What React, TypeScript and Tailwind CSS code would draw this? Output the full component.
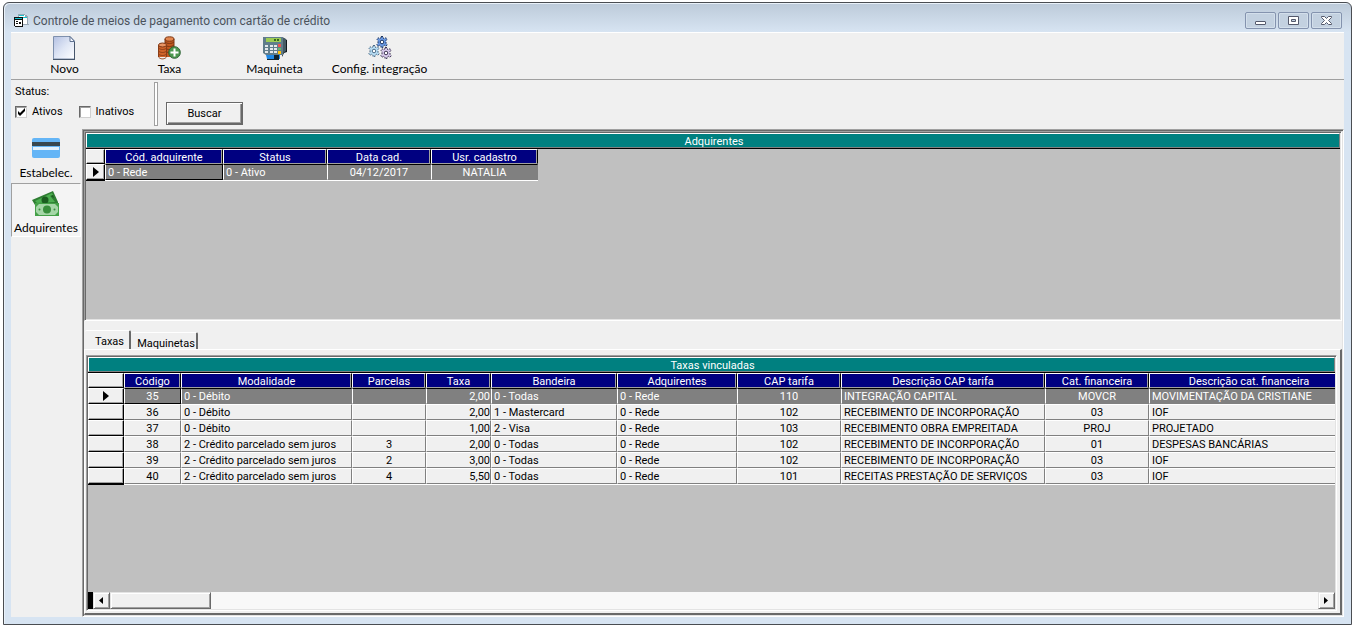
import type { ReactNode } from "react";
import { clsx } from "clsx";

interface Column {
    label: string;
    width: string;
    align?: "left" | "center" | "right";
}

interface GridProps {
    id: string;
    title: string;
    selectorWidth: string;
    tableWidth: string;
    columns: Column[];
    rows: string[][];
    children?: ReactNode;
}

const sunken = "border border-t-[#a0a0a0] border-l-[#a0a0a0] border-r-white border-b-white p-px shadow-[inset_1px_1px_0_#696969,inset_-1px_-1px_0_#e3e3e3]";

const adquirentesColumns: Column[] = [
    { label: "Cód. adquirente", width: "w-[118px]" },
    { label: "Status", width: "w-[104px]" },
    { label: "Data cad.", width: "w-[104px]", align: "center" },
    { label: "Usr. cadastro", width: "w-[107px]", align: "center" },
];

const adquirentesRows = [["0 - Rede", "0 - Ativo", "04/12/2017", "NATALIA"]];

const taxasColumns: Column[] = [
    { label: "Código", width: "w-[57px]", align: "center" },
    { label: "Modalidade", width: "w-[171px]" },
    { label: "Parcelas", width: "w-[74px]", align: "center" },
    { label: "Taxa", width: "w-[65px]", align: "right" },
    { label: "Bandeira", width: "w-[126px]" },
    { label: "Adquirentes", width: "w-[120px]" },
    { label: "CAP tarifa", width: "w-[104px]", align: "center" },
    { label: "Descrição CAP tarifa", width: "w-[204px]" },
    { label: "Cat. financeira", width: "w-[104px]", align: "center" },
    { label: "Descrição cat. financeira", width: "w-[200px]" },
];

const taxasRows = [
    ["35", "0 - Débito", "", "2,00", "0 - Todas", "0 - Rede", "110", "INTEGRAÇÃO CAPITAL", "MOVCR", "MOVIMENTAÇÃO DA CRISTIANE"],
    ["36", "0 - Débito", "", "2,00", "1 - Mastercard", "0 - Rede", "102", "RECEBIMENTO DE INCORPORAÇÃO", "03", "IOF"],
    ["37", "0 - Débito", "", "1,00", "2 - Visa", "0 - Rede", "103", "RECEBIMENTO OBRA EMPREITADA", "PROJ", "PROJETADO"],
    ["38", "2 - Crédito parcelado sem juros", "3", "2,00", "0 - Todas", "0 - Rede", "102", "RECEBIMENTO DE INCORPORAÇÃO", "01", "DESPESAS BANCÁRIAS"],
    ["39", "2 - Crédito parcelado sem juros", "2", "3,00", "0 - Todas", "0 - Rede", "102", "RECEBIMENTO DE INCORPORAÇÃO", "03", "IOF"],
    ["40", "2 - Crédito parcelado sem juros", "4", "5,50", "0 - Todas", "0 - Rede", "101", "RECEITAS PRESTAÇÃO DE SERVIÇOS", "03", "IOF"],
];

function FormsIcon() {
    return (
        <svg width="16" height="14" viewBox="0 0 16 14" shapeRendering="crispEdges" aria-hidden="true">
            <path d="M4 0h7v1h2v1h1v8h1v1H9V9H4z" fill="#9aa7b3" />
            <path d="M5 1h6v8H5z" fill="#fff" />
            <path d="M9 3h4v7H9z" fill="#fff" />
            <path d="M5 1h5v1H5zM9 3h4v1H9z" fill="#19c5d2" />
            <path d="M0 3h9v10H1V12H0z" fill="#111" />
            <path d="M1 4h7v1H1z" fill="#19c5d2" />
            <path d="M1 6h7v6H1z" fill="#fff" />
            <path d="M2 7h2v1H2zM2 9h2v1H2zM5 8h2v2H5z" fill="#111" />
        </svg>
    );
}

function PageIcon() {
    return (
        <svg width="24" height="24" viewBox="0 0 24 24" aria-hidden="true">
            <defs>
                <linearGradient id="page" x1="0" y1="0" x2="1" y2="1">
                    <stop offset="0" stopColor="#b3c0e2" />
                    <stop offset="0.500" stopColor="#dfe6f5" />
                    <stop offset="1" stopColor="#fff" />
                </linearGradient>
            </defs>
            <path d="M.5 .5H17l4.500 4.500V23H.5z" fill="url(#page)" stroke="#7e90ad" />
            <path d="M17 .5V5.500h4.500z" fill="#f6f9ff" stroke="#5f7290" />
            <path d="M0 23.500h22M21.500 6v17" stroke="#47566b" />
        </svg>
    );
}

function CoinsIcon() {
    return (
        <svg width="24" height="24" viewBox="0 0 24 24" aria-hidden="true">
            <path d="M7 3v18h9V3z" fill="#c2591f" />
            <ellipse cx="11.500" cy="3" rx="4.500" ry="2.200" fill="#e28750" stroke="#7d3612" />
            <path d="M7 6c2 2 7 2 9 0M7 9c2 2 7 2 9 0M7 12c2 2 7 2 9 0M7 15c2 2 7 2 9 0M7 3v15M16 3v15" fill="none" stroke="#7d3612" />
            <path d="M.5 9v12h8V9z" fill="#d0642a" />
            <ellipse cx="4.500" cy="9" rx="4" ry="2" fill="#e99463" stroke="#7d3612" />
            <path d="M.5 12c2 2 6 2 8 0M.5 15c2 2 6 2 8 0M.5 18c2 2 6 2 8 0M.5 9v12c2 2.500 6 2.500 8 0V9" fill="none" stroke="#8a3d16" />
            <circle cx="16.500" cy="16.500" r="5.800" fill="#4c9850" stroke="#2c6233" />
            <path d="M16.500 12.500v8M12.500 16.500h8" stroke="#fff" strokeWidth="2" />
        </svg>
    );
}

function TerminalIcon() {
    return (
        <svg width="24" height="24" viewBox="0 0 24 24" aria-hidden="true">
            <path d="M19 1l5 3v12l-3 1-2 4z" fill="#10191d" />
            <path d="M19 1l4 2v12l-4 3z" fill="#455a64" />
            <path d="M0 1h20v18H3l-3-2z" fill="#607d8b" />
            <path d="M3 2h15v4H3z" fill="#9ccc55" />
            <path d="M11 3h2v2h-2zM14 3h2v2h-2z" fill="#33691e" />
            <path d="M2 9h3v2H2zM7 9h3v2H7zM11 9h3v2h-3zM2 12h3v2H2zM7 12h3v2H7zM11 12h3v2h-3zM2 15h3v2H2zM7 15h3v2H7zM11 15h3v2h-3z" fill="#e3e8eb" />
            <path d="M15 8h3v3h-3z" fill="#ef5350" />
            <path d="M15 12h3v2h-3z" fill="#66bb6a" />
            <path d="M15 15h3v3h-3z" fill="#ffc107" />
            <path d="M3 19h14v4H4z" fill="#1e88e5" />
            <path d="M11 19h5v4h-5zM4 23h12v1H4z" fill="#12242e" />
        </svg>
    );
}

function Gear({ x, y, fill, edge }: { x: number; y: number; fill: string; edge: string }) {
    return (
        <g transform={`translate(${x} ${y})`}>
            <path
                d="M-1-5.500h2V-4L2.500-3.200 4-4.300 5-2.700 4-1.500V1.500L5.200 2.700 4 4.300 2.500 3.300 1 4V5.500h-2V4L-2.500 3.300-4 4.300-5.200 2.700-4 1.500v-3L-5-2.700-4-4.300-2.500-3.200-1-4z"
                fill={fill}
                stroke={edge}
                strokeDasharray="2 1"
            />
            <circle r="1.800" fill="#fff" stroke={edge} />
        </g>
    );
}

function GearsIcon() {
    return (
        <svg width="24" height="24" viewBox="0 0 24 24" aria-hidden="true">
            <Gear x={14} y={6} fill="#6b9be6" edge="#1d355f" />
            <Gear x={6} y={15} fill="#b9e0f7" edge="#4c6a85" />
            <Gear x={18} y={17} fill="#dccdf0" edge="#3b3350" />
        </svg>
    );
}

function CardIcon() {
    return (
        <svg width="28" height="20" viewBox="0 0 28 20" aria-hidden="true">
            <rect width="28" height="20" rx="2" fill="#64b5f6" />
            <path d="M0 4h28v4H0z" fill="#37474f" />
            <path d="M1 9h26v3H1z" fill="#e3f2fd" />
        </svg>
    );
}

function MoneyIcon() {
    return (
        <svg width="28" height="26" viewBox="0 0 28 26" aria-hidden="true">
            <path d="M0 10L21 1l5 11v3H3z" fill="#2e7d32" />
            <path d="M3 11L20 3l1 2-2 2 4 5-18 1z" fill="#4caf50" />
            <circle cx="13" cy="10" r="3.500" fill="#1b5e20" />
            <path d="M18 6l3-1 1 3z" fill="#1b5e20" />
            <path d="M3 13h24v13H3z" fill="#43a047" />
            <path d="M7 14h16l3 3v5l-3 3H7l-3-3v-5z" fill="#a5d6a7" />
            <circle cx="15" cy="19.500" r="4" fill="#388e3c" />
            <circle cx="7.500" cy="19.500" r="1" fill="#388e3c" />
            <circle cx="22.500" cy="19.500" r="1" fill="#388e3c" />
        </svg>
    );
}

function WindowButton({ label, children }: { label: string; children: ReactNode }) {
    return (
        <button
            aria-label={label}
            className="flex h-[17px] w-[31px] items-center justify-center rounded-xs border border-[#8493ae] bg-[#c3d1e0] shadow-[inset_0_0_0_1px_#d3dfeb]"
        >
            <svg width="13" height="11" viewBox="0 0 13 11" aria-hidden="true">
                {children}
            </svg>
        </button>
    );
}

function ToolbarButton({ icon, label }: { icon: ReactNode; label: string }) {
    return (
        <button className="flex w-[105px] flex-col items-center pt-[3px] font-[Lato,sans-serif] text-xs leading-[18px] whitespace-nowrap">
            {icon}
            {label}
        </button>
    );
}

function SideButton({ icon, label, active }: { icon: ReactNode; label: string; active?: boolean }) {
    return (
        <button
            className={clsx(
                "flex h-[54px] w-[70px] flex-col items-center justify-end border font-[Lato,sans-serif] text-xs leading-4 whitespace-nowrap",
                active ? "gap-1 border-t-[#a0a0a0] border-l-[#a0a0a0] border-r-white border-b-white bg-[#f4f4f4]" : "gap-[7px] border-transparent pb-px"
            )}
        >
            {icon}
            {label}
        </button>
    );
}

function StatusCheck({ label, checked }: { label: string; checked?: boolean }) {
    return (
        <label className="relative flex h-4 items-center gap-[5px]">
            <input
                type="checkbox"
                defaultChecked={checked}
                className="peer size-3 appearance-none border border-t-[#696969] border-l-[#696969] border-r-[#d0d0d0] border-b-[#d0d0d0] bg-white shadow-[inset_1px_1px_0_#a0a0a0]"
            />
            <svg
                width="12"
                height="12"
                viewBox="0 0 12 12"
                aria-hidden="true"
                className="pointer-events-none absolute top-[2px] left-0 hidden peer-checked:block"
            >
                <path d="M3 5v3l2 2 5-5V2L5 7z" fill="#000" />
            </svg>
            <span className="pt-px">{label}</span>
        </label>
    );
}

function SelectorMark() {
    return (
        <svg width="6" height="10" viewBox="0 0 6 10" aria-hidden="true" className="mx-auto block">
            <path d="M0 0l6 5-6 5z" fill="#000" />
        </svg>
    );
}

function DataGrid({ id, title, selectorWidth, tableWidth, columns, rows, children }: GridProps) {
    const selector = "border-t border-l border-r border-b border-t-white border-l-white border-r-black border-b-black bg-[#f0f0f0] p-0 shadow-[inset_-1px_-1px_0_#a0a0a0]";

    return (
        <div className={clsx("flex min-h-0 min-w-0 flex-1 flex-col overflow-hidden bg-[#c0c0c0]", sunken)}>
            <div className="h-4 shrink-0 border-b border-black">
                <h2 id={id} className="h-[15px] border border-t-white border-l-white border-r-[#808080] border-b-[#808080] bg-[#008080] pl-[2px] text-center leading-4 text-white">
                    {title}
                </h2>
            </div>
            <div className="min-h-0 flex-1 overflow-hidden">
                <table aria-labelledby={id} className={clsx("table-fixed border-separate border-spacing-0 whitespace-nowrap", tableWidth)}>
                    <thead>
                        <tr className="h-[15px]">
                            <th aria-label="Seleção" className={clsx(selector, selectorWidth)} />
                            {columns.map((col) => (
                                <th
                                    key={col.label}
                                    className={clsx(
                                        "h-[15px] border border-t-white border-l-white border-r-black border-b-[#a0a0a0] bg-[#000080] px-0 pt-[2px] pb-0 text-center leading-[11px] font-normal text-white shadow-[inset_-1px_0_0_#a0a0a0]",
                                        col.width
                                    )}
                                >
                                    {col.label}
                                </th>
                            ))}
                        </tr>
                    </thead>
                    <tbody>
                        {rows.map((row, r) => (
                            <tr key={row[0]} className="h-4">
                                <td className={selector}>{r === 0 && <SelectorMark />}</td>
                                {row.map((value, c) => (
                                    <td
                                        key={columns[c].label}
                                        className={clsx(
                                            "h-4 border pt-[2px] pr-0 pb-0 leading-3",
                                            r > 0 && "border-t-white border-l-white border-r-[#808080] border-b-[#808080] bg-[#f0f0f0]",
                                            r === 0 && "border-t-black border-l-white bg-[#808080] text-white",
                                            r === 0 && (c === 0 ? "border-r-black border-b-black" : "border-r-[#808080] border-b-[#808080]"),
                                            columns[c].align === "center" && "pl-0 text-center",
                                            columns[c].align === "right" && "pl-0 text-right",
                                            (columns[c].align ?? "left") === "left" && "pl-[2px]"
                                        )}
                                    >
                                        {value}
                                    </td>
                                ))}
                            </tr>
                        ))}
                    </tbody>
                    <tfoot>
                        <tr>
                            <td className="h-px bg-black p-0" />
                            <td colSpan={columns.length} className="h-px bg-white p-0" />
                        </tr>
                    </tfoot>
                </table>
            </div>
            {children}
        </div>
    );
}

function ScrollButton({ label, path }: { label: string; path: string }) {
    return (
        <button
            aria-label={label}
            className="flex w-[17px] shrink-0 items-center justify-center border border-t-[#e3e3e3] border-l-[#e3e3e3] border-r-[#696969] border-b-[#696969] bg-[#f0f0f0] pr-[2px] shadow-[inset_1px_1px_0_#fff,inset_-1px_-1px_0_#a0a0a0]"
        >
            <svg width="4" height="7" viewBox="0 0 4 7" aria-hidden="true">
                <path d={path} fill="#000" />
            </svg>
        </button>
    );
}

function HorizontalScroll() {
    return (
        <div className="flex h-[17px] shrink-0 bg-[#f8f8f8]">
            <div className="w-[5px] shrink-0 bg-black" />
            <ScrollButton label="Rolar para a esquerda" path="M4 0v7L0 3.500z" />
            <div className="flex flex-1">
                <div className="w-[101px] border border-t-[#e3e3e3] border-l-[#e3e3e3] border-r-[#696969] border-b-[#696969] bg-[#f0f0f0] shadow-[inset_1px_1px_0_#fff,inset_-1px_-1px_0_#a0a0a0]" />
            </div>
            <ScrollButton label="Rolar para a direita" path="M0 0v7l4-3.500z" />
        </div>
    );
}

export default function App() {
    return (
        <div className="flex h-screen bg-white pt-[2px] pr-px pb-[2px] pl-[3px] font-[Roboto,sans-serif] text-[11px] text-black">
            <div className="flex min-w-0 flex-1 flex-col rounded-t-md border border-[#4a4d52] bg-[#d7e4f2] bg-linear-to-b from-[#bccad9] to-[#d7e4f2] to-[29px] px-[7px] pb-[7px] shadow-[inset_1px_1px_0_#e9f1f9]">
                <header className="flex h-[29px] shrink-0 items-center justify-between pt-[6px] pr-[2px] pl-[3px]">
                    <div className="flex items-center gap-[3px]">
                        <FormsIcon />
                        <h1 className="text-xs leading-4 text-[#4b535c]">Controle de meios de pagamento com cartão de crédito</h1>
                    </div>
                    <div className="flex gap-[2px]">
                        <WindowButton label="Minimizar">
                            <rect x="1.500" y="6.500" width="10" height="3" rx="0.500" fill="#fff" stroke="#54596b" />
                        </WindowButton>
                        <WindowButton label="Maximizar">
                            <path d="M1.500 1.500h10v8h-10zM4.500 4.500v2h4v-2z" fill="#fff" fillRule="evenodd" stroke="#54596b" />
                        </WindowButton>
                        <WindowButton label="Fechar">
                            <path d="M1.500 1.500h3l2 2 2-2h3v1l-3 3 3 3v1h-3l-2-2-2 2h-3v-1l3-3-3-3z" fill="#fff" stroke="#54596b" />
                        </WindowButton>
                    </div>
                </header>

                <main className="flex min-h-0 flex-1 flex-col border-t border-white bg-[#f0f0f0]">
                    {/* Toolbar */}
                    <nav className="flex h-[47px] shrink-0 border-b border-[#a0a0a0] pl-px">
                        <ToolbarButton icon={<PageIcon />} label="Novo" />
                        <ToolbarButton icon={<CoinsIcon />} label="Taxa" />
                        <ToolbarButton icon={<TerminalIcon />} label="Maquineta" />
                        <ToolbarButton icon={<GearsIcon />} label="Config. integração" />
                    </nav>

                    {/* Filtro */}
                    <form className="flex h-[49px] shrink-0" onSubmit={(e) => e.preventDefault()}>
                        <fieldset className="w-[143px] pt-1 pl-1">
                            <legend className="float-left mb-1 w-full leading-4">Status:</legend>
                            <div className="clear-both flex gap-4">
                                <StatusCheck label="Ativos" checked />
                                <StatusCheck label="Inativos" />
                            </div>
                        </fieldset>
                        <div className="mt-[2px] h-11 w-1 border border-[#a0a0a0] bg-white" />
                        <button
                            type="submit"
                            className="mt-[22px] ml-2 h-[23px] w-[77px] border border-[#696969] bg-[#f0f0f0] pt-px shadow-[inset_1px_1px_0_#fff,inset_-1px_-1px_0_#696969,inset_-2px_-2px_0_#a0a0a0]"
                        >
                            Buscar
                        </button>
                    </form>

                    <div className="flex min-h-0 flex-1">
                        <aside className="w-[71px] shrink-0">
                            <SideButton icon={<CardIcon />} label="Estabelec." />
                            <SideButton icon={<MoneyIcon />} label="Adquirentes" active />
                        </aside>

                        <section className={clsx("flex min-w-0 flex-1 flex-col", sunken)}>
                            <div className="flex h-[190px] shrink-0">
                                <DataGrid
                                    id="adquirentes"
                                    title="Adquirentes"
                                    selectorWidth="w-[19px]"
                                    tableWidth="w-[452px]"
                                    columns={adquirentesColumns}
                                    rows={adquirentesRows}
                                />
                            </div>

                            <div role="tablist" className="flex h-7 shrink-0 items-end pl-px">
                                <button role="tab" aria-selected="true" className="h-[19px] w-[46px] rounded-t-xs border-t border-r-2 border-t-white border-r-[#696969] pt-[3px] pl-[5px]">
                                    Taxas
                                </button>
                                <button role="tab" aria-selected="false" className="h-[17px] w-[67px] rounded-t-xs border-t border-r-2 border-t-white border-r-[#696969] pt-[3px] pl-[5px]">
                                    Maquinetas
                                </button>
                            </div>

                            <div role="tabpanel" className="flex min-h-0 flex-1 border-t border-r-2 border-b-2 border-l border-t-white border-r-[#696969] border-b-[#696969] border-l-white pt-[5px] pr-[3px] pb-[2px] pl-px">
                                <DataGrid
                                    id="taxas"
                                    title="Taxas vinculadas"
                                    selectorWidth="w-[36px]"
                                    tableWidth="w-[1261px]"
                                    columns={taxasColumns}
                                    rows={taxasRows}
                                >
                                    <HorizontalScroll />
                                </DataGrid>
                            </div>
                        </section>
                    </div>
                </main>
            </div>
        </div>
    );
}
